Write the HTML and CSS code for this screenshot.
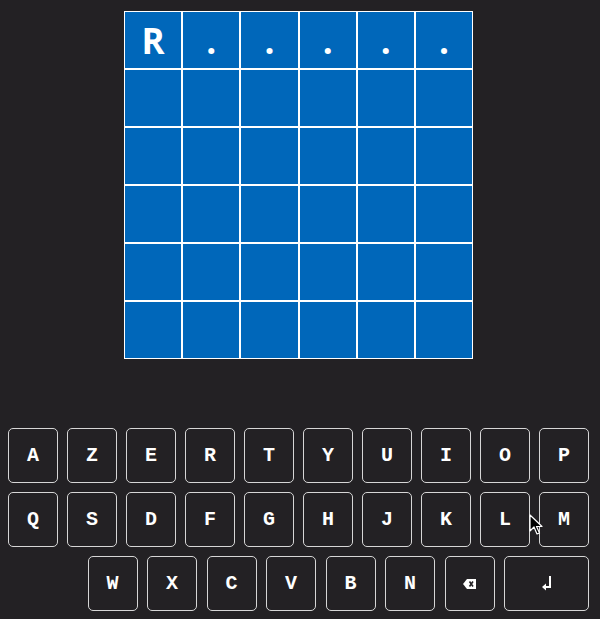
FILE: index.html
```html
<!DOCTYPE html>
<html>
<head>
<meta charset="utf-8">
<link rel="stylesheet" href="styles.css">
</head>
<body>
<div class="board">
  <div class="cell">R</div><div class="cell">.</div><div class="cell">.</div><div class="cell">.</div><div class="cell">.</div><div class="cell">.</div>
  <div class="cell"></div><div class="cell"></div><div class="cell"></div><div class="cell"></div><div class="cell"></div><div class="cell"></div>
  <div class="cell"></div><div class="cell"></div><div class="cell"></div><div class="cell"></div><div class="cell"></div><div class="cell"></div>
  <div class="cell"></div><div class="cell"></div><div class="cell"></div><div class="cell"></div><div class="cell"></div><div class="cell"></div>
  <div class="cell"></div><div class="cell"></div><div class="cell"></div><div class="cell"></div><div class="cell"></div><div class="cell"></div>
  <div class="cell"></div><div class="cell"></div><div class="cell"></div><div class="cell"></div><div class="cell"></div><div class="cell"></div>
</div>
<div class="keyboard">
  <div class="row">
    <div class="key">A</div><div class="key">Z</div><div class="key">E</div><div class="key">R</div><div class="key">T</div><div class="key">Y</div><div class="key">U</div><div class="key">I</div><div class="key">O</div><div class="key">P</div>
  </div>
  <div class="row">
    <div class="key">Q</div><div class="key">S</div><div class="key">D</div><div class="key">F</div><div class="key">G</div><div class="key">H</div><div class="key">J</div><div class="key">K</div><div class="key">L</div><div class="key">M</div>
  </div>
  <div class="row row-last">
    <div class="key">W</div><div class="key">X</div><div class="key">C</div><div class="key">V</div><div class="key">B</div><div class="key">N</div>
    <div class="key">
      <svg class="ico-back" width="13" height="10" viewBox="0 0 13 10"><path d="M4 0H13V10H4L0 5Z" fill="#fff"/><path d="M6.5 2.5L10 7.5M10 2.5L6.5 7.5" stroke="#232124" stroke-width="1.6"/></svg>
    </div>
    <div class="key key-wide">
      <svg width="10" height="15" viewBox="0 0 10 15"><path d="M8 0V11H3" fill="none" stroke="#fff" stroke-width="2"/><path d="M0 11L4 7.5V14.5Z" fill="#fff"/></svg>
    </div>
  </div>
</div>
<svg class="cursor" width="14" height="22" viewBox="0 0 14 22"><path d="M1 1V17L5 13L8 20L10.5 19L7.5 12.5H13Z" fill="#000" stroke="#fff" stroke-width="1.2" stroke-linejoin="round"/></svg>
</body>
</html>
```
FILE: styles.css
```css
html, body {
  margin: 0;
  padding: 0;
}
body {
  background: #232124;
  width: 600px;
  height: 619px;
  overflow: hidden;
  position: relative;
  font-family: "Open Sans", Roboto, sans-serif;
}
.board {
  display: grid;
  grid-template-columns: repeat(6, 58.2px);
  grid-template-rows: repeat(6, 58px);
  width: 349px;
  margin: 11px 0 0 124px;
}
.cell {
  box-sizing: border-box;
  border: 1px solid #fff;
  background: #0067ba;
  color: #fff;
  font-weight: 700;
  font-size: 35px;
  line-height: 58px;
  text-align: center;
}
.keyboard {
  margin: 69px 0 0 8px;
  width: 581px;
  display: flex;
  flex-direction: column;
  gap: 9px;
}
.row {
  display: flex;
  gap: 9px;
}
.row-last {
  justify-content: flex-end;
  gap: 9.5px;
}
.key {
  box-sizing: border-box;
  width: 50px;
  height: 55px;
  border: 1.5px solid #d6d6d6;
  border-radius: 5px;
  display: flex;
  align-items: center;
  justify-content: center;
  color: #fff;
  font-family: "Courier New", "Nimbus Mono PS", "Nimbus Mono L", FreeMono, "Liberation Mono", monospace;
  font-weight: 700;
  font-size: 20px;
}
.key-wide {
  width: 85px;
}
.cursor {
  position: absolute;
  left: 529px;
  top: 514px;
}
```
